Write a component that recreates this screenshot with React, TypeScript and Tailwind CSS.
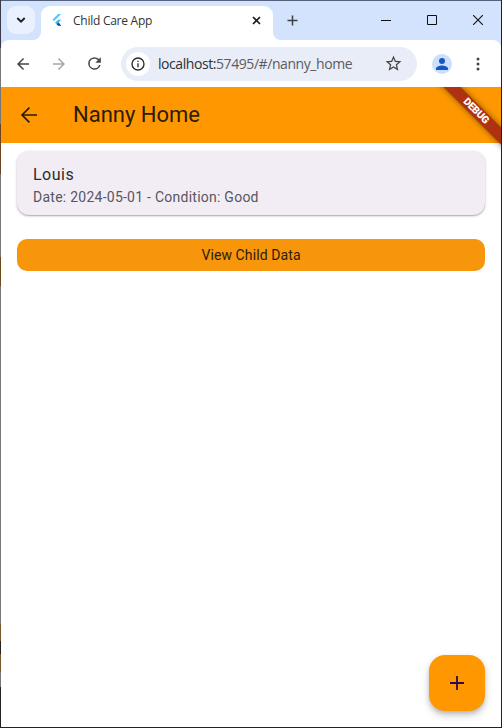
import React from "react";

const ARROW_BACK = "M20 11H7.83l5.59-5.59L12 4l-8 8 8 8 1.41-1.41L7.83 13H20v-2z";

function Icon({ d, size, className = "" }: { d: string; size: number; className?: string }) {
  return (
    <svg width={size} height={size} viewBox="0 0 24 24" fill="currentColor" className={"shrink-0 " + className}>
      <path d={d} />
    </svg>
  );
}

function TabStrip() {
  return (
    <div className="flex h-[39px] w-full items-start bg-[#d3e2fd]">
      <button className="mt-[5px] ml-[6px] flex h-7 w-7 items-center justify-center rounded-[9px] bg-[#e9f1fe] text-[#1f1f1f]">
        <svg width="10" height="8" viewBox="0 0 10 8" fill="none" stroke="currentColor" strokeWidth="1.9">
          <path d="M1.3 2 5 5.7 8.7 2" />
        </svg>
      </button>
      <div className="relative mt-[5px] ml-[6px] flex h-[34px] w-[232px] items-center rounded-t-[9px] bg-white pb-[5px]">
        <svg className="absolute bottom-0 -left-2" width="8" height="8" viewBox="0 0 8 8">
          <path d="M8 0v8H0a8 8 0 0 0 8-8z" fill="#fff" />
        </svg>
        <svg className="absolute -right-2 bottom-0" width="8" height="8" viewBox="0 0 8 8">
          <path d="M0 0v8h8a8 8 0 0 1-8-8z" fill="#fff" />
        </svg>
        <svg className="ml-[11px] shrink-0" width="10" height="13" viewBox="0 0 10 13">
          <path d="M6.2 0H9.2L2 7.1.5 5.6z" fill="#54c5f8" />
          <path d="M6.2 5.8H9.2L6.6 8.5 9.2 11.8H6.2L3 8.7z" fill="#42b8ee" />
          <path d="M4.7 10.2 6.6 8.5 9.2 11.8H6.2z" fill="#01579b" />
        </svg>
        <span className="ml-[11px] whitespace-nowrap font-['Open_Sans',sans-serif] text-[12px] leading-4 tracking-[-0.26px] text-[#333333]">
          Child Care App
        </span>
        <svg className="mr-[12px] ml-auto" width="9" height="9" viewBox="0 0 9 9" fill="none" stroke="#1f1f1f" strokeWidth="1.7">
          <path d="m1 1 7 7M8 1 1 8" />
        </svg>
      </div>
      <svg className="mt-[14px] ml-[14px]" width="11" height="11" viewBox="0 0 11 11" fill="none" stroke="#3c4043" strokeWidth="1.5">
        <path d="M5.5.5v10M.5 5.5h10" />
      </svg>
      <svg className="mt-[14px] ml-auto" width="10" height="11" viewBox="0 0 10 11" shapeRendering="crispEdges">
        <path d="M0 5h10v1H0z" fill="#111" />
      </svg>
      <svg className="mt-[14px] ml-[36px]" width="10" height="10" viewBox="0 0 10 10" fill="none" stroke="#111">
        <path d="M.5.5h9v9h-9z" />
      </svg>
      <svg className="mt-[14px] mr-[18px] ml-[36px]" width="10" height="10" viewBox="0 0 10 10" fill="none" stroke="#111" strokeWidth="1.1">
        <path d="m0 0 10 10M10 0 0 10" />
      </svg>
    </div>
  );
}

function Toolbar() {
  return (
    <div className="bg-[#d3e2fd]">
      <div className="flex h-[47px] items-center rounded-t-[8px] bg-white text-[#474747]">
        <Icon d={ARROW_BACK} size={18} className="ml-[13px]" />
        <Icon d={ARROW_BACK} size={18} className="ml-[18px] rotate-180 text-[#a8a8a8]" />
        <Icon
          size={19}
          className="ml-[17px]"
          d="M17.65 6.35A7.96 7.96 0 0 0 12 4a8 8 0 1 0 7.73 10h-2.08A6 6 0 1 1 12 6c1.66 0 3.14.69 4.22 1.78L13 11h7V4l-2.35 2.35z"
        />
        <div className="ml-[17px] flex h-[34px] w-[296px] items-center rounded-full bg-[#e9edf7] pl-[5px]">
          <div className="flex h-6 w-6 items-center justify-center rounded-full bg-white text-[#2b2b2b]">
            <Icon
              size={16}
              d="M11 7h2v2h-2zm0 4h2v6h-2zm1-9a10 10 0 1 0 0 20 10 10 0 0 0 0-20zm0 18a8 8 0 1 1 0-16 8 8 0 0 1 0 16z"
            />
          </div>
          <span className="ml-2 whitespace-nowrap font-['Open_Sans',sans-serif] text-[14px] leading-5 tracking-[-0.43px] text-[#5a5c61]">
            <span className="text-[#2f3033]">localhost:</span>
            <span>57495/#/nanny_home</span>
          </span>
          <Icon
            size={19}
            className="mr-[14px] ml-auto"
            d="M22 9.24l-7.19-.62L12 2 9.19 8.63 2 9.24l5.46 4.73L5.82 21 12 17.27 18.18 21l-1.63-7.03L22 9.24zM12 15.4l-3.76 2.27 1-4.28-3.32-2.88 4.38-.38L12 6.1l1.71 4.04 4.38.38-3.32 2.88 1 4.28L12 15.4z"
          />
        </div>
        <div className="ml-[15px] flex h-5 w-5 items-center justify-center rounded-full bg-[#cbe0fc] text-[#1a55c4]">
          <Icon size={18} d="M12 12a4 4 0 1 0 0-8 4 4 0 0 0 0 8zm0 2c-2.67 0-8 1.34-8 4v2h16v-2c0-2.66-5.33-4-8-4z" />
        </div>
        <svg className="ml-[24px]" width="4" height="14" viewBox="0 0 4 14" fill="currentColor">
          <circle cx="2" cy="1.9" r="1.5" />
          <circle cx="2" cy="7" r="1.5" />
          <circle cx="2" cy="12.1" r="1.5" />
        </svg>
      </div>
    </div>
  );
}

function DebugBanner() {
  return (
    <div className="absolute top-0 right-0 h-[66px] w-[66px] overflow-hidden">
      <div className="absolute top-[17.5px] -right-[26.5px] flex h-3 w-[104px] rotate-45 items-center justify-center bg-[#ae3112] font-[Roboto,sans-serif] text-[10.2px] leading-3 font-black tracking-[-0.2px] text-white shadow-[0_0_6px_rgba(0,0,0,0.5)]">
        DEBUG
      </div>
    </div>
  );
}

export default function App() {
  return (
    <div className="flex h-[728px] w-[502px] overflow-hidden bg-white">
      <div className="w-px shrink-0 bg-[linear-gradient(#3a3a48_0_48px,#777_48px_124px,#6b4320_124px_174px,#777_174px_257px,#6b4a20_257px_286px,#777_286px_624px,#7a5630_624px_641px,#222_641px_654px,#7a5630_654px_672px,#777_672px_687px,#222_687px)]" />
      <div className="relative flex w-[500px] flex-col border-t border-b border-t-[#56617c] border-b-[#222]">
        <TabStrip />
        <Toolbar />
        <main className="relative flex grow flex-col bg-white font-[Roboto,sans-serif]">
          <header className="flex h-14 items-center bg-[#ff9800] text-[#2b1c0c]">
            <svg className="ml-4" width="24" height="24" viewBox="0 0 24 24" fill="none" stroke="currentColor" strokeWidth="1.7">
              <path d="M20 12H5.2M12.4 4.7 5.1 12l7.3 7.3" />
            </svg>
            <h1 className="ml-8 text-[22px] leading-7 font-normal">Nanny Home</h1>
          </header>
          <section className="mx-4 mt-2 flex h-16 flex-col rounded-xl bg-[#f2edf5] px-4 pt-3 shadow-[0_1px_3px_rgba(0,0,0,0.22),0_1px_1px_rgba(0,0,0,0.16)]">
            <div className="text-[16px] leading-6 tracking-[0.5px] text-[#2d2b30]">Louis</div>
            <div className="text-[14px] leading-5 tracking-[0.25px] text-[#59555f]">Date: 2024-05-01 - Condition: Good</div>
          </section>
          <button className="mx-4 mt-6 h-8 rounded-[10px] bg-[#f8960b] text-center text-[14px] leading-5 tracking-[0.1px] text-[#2b1c0c]">
            View Child Data
          </button>
          <button className="mt-auto mr-4 mb-4 flex h-14 w-14 items-center justify-center self-end rounded-2xl bg-[#ff9800] text-[#2f0a4d] shadow-[0_3px_5px_-1px_rgba(0,0,0,0.2),0_5px_8px_rgba(0,0,0,0.12),0_1px_10px_rgba(0,0,0,0.06)]">
            <svg width="24" height="24" viewBox="0 0 24 24" fill="none" stroke="currentColor" strokeWidth="1.8">
              <path d="M12 5v14M5 12h14" />
            </svg>
          </button>
          <DebugBanner />
        </main>
      </div>
      <div className="w-px shrink-0 bg-[#222]" />
    </div>
  );
}
